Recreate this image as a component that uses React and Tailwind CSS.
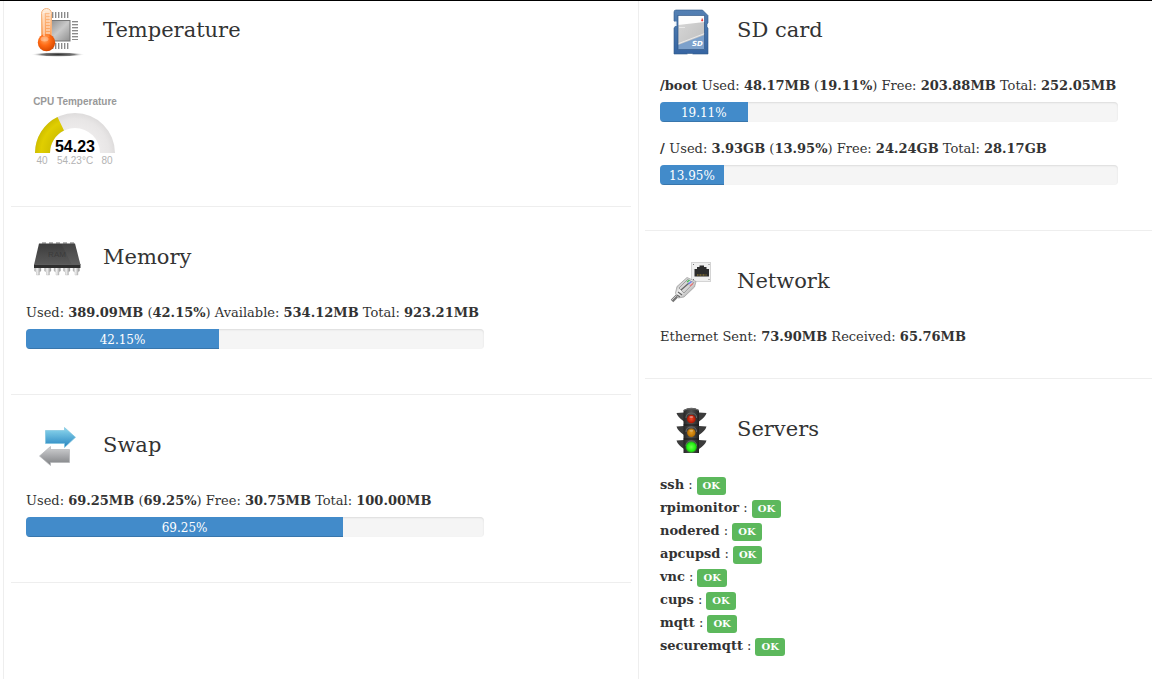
import { Fragment } from "react";

const servers = [
  "ssh",
  "rpimonitor",
  "nodered",
  "apcupsd",
  "vnc",
  "cups",
  "mqtt",
  "securemqtt",
];

const TemperatureIcon = () => (
  <svg viewBox="0 0 48 48" className="size-12 shrink-0 overflow-visible" aria-hidden="true">
    <defs>
      <linearGradient id="chip" x1="0" y1="0" x2="1" y2="1">
        <stop offset="0" stopColor="#8c8c8c" />
        <stop offset="0.5" stopColor="#c9c9c9" />
        <stop offset="1" stopColor="#8f8f8f" />
      </linearGradient>
      <linearGradient id="tube" x1="0" y1="0" x2="0" y2="1">
        <stop offset="0" stopColor="#fff3e6" />
        <stop offset="0.35" stopColor="#ffc795" />
        <stop offset="1" stopColor="#f98a3c" />
      </linearGradient>
      <radialGradient id="bulb" cx="0.4" cy="0.35" r="0.65">
        <stop offset="0" stopColor="#ffa45c" />
        <stop offset="0.5" stopColor="#ff6a14" />
        <stop offset="1" stopColor="#d94a00" />
      </radialGradient>
      <radialGradient id="ground">
        <stop offset="0" stopColor="#333" />
        <stop offset="0.6" stopColor="#777" />
        <stop offset="1" stopColor="#fff" stopOpacity="0" />
      </radialGradient>
    </defs>
    <ellipse cx="25" cy="46.5" rx="27" ry="2.4" fill="url(#ground)" />
    <path
      d="M19.500 4v6M22.500 4v6M25.500 4v6M28.500 4v6M31.500 4v6M34.500 4v6M19.500 35v6M22.500 35v6M25.500 35v6M28.500 35v6M31.500 35v6M34.500 35v6"
      stroke="#8a8a8a"
    />
    <path
      d="M20.500 4v6M23.500 4v6M26.500 4v6M29.500 4v6M32.500 4v6M35.500 4v6M20.500 35v6M23.500 35v6M26.500 35v6M29.500 35v6M32.500 35v6M35.500 35v6"
      stroke="#d4d4d4"
    />
    <path
      d="M39 13.500h6M39 16.500h6M39 19.500h6M39 22.500h6M39 25.500h6M39 28.500h6M39 31.500h6"
      stroke="#8a8a8a"
    />
    <path
      d="M39 14.500h6M39 17.500h6M39 20.500h6M39 23.500h6M39 26.500h6M39 29.500h6"
      stroke="#d4d4d4"
    />
    <rect x="16" y="12.5" width="21" height="20.5" fill="url(#chip)" stroke="#777" />
    <rect x="8.5" y="0.5" width="10" height="34" rx="5" fill="url(#tube)" stroke="#f5b27c" />
    <circle cx="13.5" cy="34.5" r="8.7" fill="url(#bulb)" />
    <path d="M10.5 5v24h6V5z" fill="#fc9a50" opacity="0.5" />
    <path d="M13 7h4M13 10h4M13 13h4M13 16h4M13 19h4M13 22h4M13 25h4" stroke="#fff" strokeWidth="0.8" />
    <path d="M11 4v24" stroke="#fff" strokeWidth="1.4" opacity="0.6" />
    <ellipse cx="11.5" cy="31" rx="4" ry="2.5" fill="#fff" opacity="0.3" />
  </svg>
);

const MemoryIcon = () => (
  <svg viewBox="0 0 48 48" className="size-12 shrink-0" aria-hidden="true">
    <defs>
      <linearGradient id="ram" x1="0" y1="0" x2="0" y2="1">
        <stop offset="0" stopColor="#3c3c3c" />
        <stop offset="1" stopColor="#5a5a5a" />
      </linearGradient>
      <linearGradient id="pin" x1="0" y1="0" x2="1" y2="0">
        <stop offset="0" stopColor="#a5a5a5" />
        <stop offset="0.4" stopColor="#f2f2f2" />
        <stop offset="1" stopColor="#8c8c8c" />
      </linearGradient>
    </defs>
    <path d="M9 8h4M16 8h4M23 8h4M30 8h4M37 8h4" stroke="#b5b5b5" strokeWidth="2" />
    {[1.5, 11.5, 21, 30.5, 40].map((x) => (
      <path key={x} d={`M${x} 31h6.500v5l-1.500 1v3h-3v-3l-2-1z`} fill="url(#pin)" stroke="#b5b5b5" strokeWidth="0.4" />
    ))}
    <path d="M6 8.500h36l5.500 21.500H1z" fill="url(#ram)" />
    <path d="M28 8.500h14l5.500 21.500H39z" fill="#fff" opacity="0.04" />
    <path d="M1 29.500h46.500v3.500H1z" fill="#2e2e2e" />
    <path d="M1 29.500h46.500" stroke="#6e6e6e" strokeWidth="0.6" />
    <text
      x="24"
      y="22"
      textAnchor="middle"
      fontSize="8"
      fill="#3b3b3b"
      className="font-['Liberation_Sans',sans-serif]"
    >
      RAM
    </text>
  </svg>
);

const SwapIcon = () => (
  <svg viewBox="0 0 48 48" className="size-12 shrink-0" aria-hidden="true">
    <defs>
      <linearGradient id="right" x1="0" y1="0" x2="0" y2="1">
        <stop offset="0" stopColor="#8fd9ee" />
        <stop offset="1" stopColor="#2583c0" />
      </linearGradient>
      <linearGradient id="left" x1="0" y1="0" x2="0" y2="1">
        <stop offset="0" stopColor="#d2d3d5" />
        <stop offset="1" stopColor="#7d7f82" />
      </linearGradient>
    </defs>
    <path d="M12.500 7.500H31.500V4.500L42.500 14.300L31.500 24.500V20.500H12.500z" fill="url(#right)" stroke="#7fc4de" strokeWidth="0.7" />
    <path d="M36.500 26.500H17.500V23.500L6.500 33L17.500 42.500V39.500H36.500z" fill="url(#left)" stroke="#b3b5b7" strokeWidth="0.7" />
  </svg>
);

const SdCardIcon = () => (
  <svg viewBox="0 0 48 48" className="size-12 shrink-0" aria-hidden="true">
    <defs>
      <linearGradient id="card" x1="0" y1="0" x2="0" y2="1">
        <stop offset="0" stopColor="#5480b3" />
        <stop offset="1" stopColor="#3665a2" />
      </linearGradient>
      <linearGradient id="label" x1="0" y1="0" x2="1" y2="1">
        <stop offset="0" stopColor="#d8d8d8" />
        <stop offset="1" stopColor="#bdbdbd" />
      </linearGradient>
    </defs>
    <path
      d="M9 2H35.500L41 7.500V15l-1 1v3l1 1V46H26l-1-.5h-4l-1 .5H7V20l1.500-2V14L7 13V4q0-2 2-2z"
      fill="url(#card)"
      stroke="#315988"
      strokeWidth="0.6"
    />
    <path d="M7.500 13.500h2v4.500h-2z" fill="#eef3f8" />
    <rect x="11" y="7.500" width="26.500" height="34" fill="url(#label)" />
    <path d="M11 7.500h26.500V14L11 17z" fill="#fdfdfd" />
    <path d="M11 37L37.500 27V41.500H11z" fill="#7da1cb" />
    <path d="M11 35.800L37.500 25.600" stroke="#f2f2f2" strokeWidth="0.8" />
    <path d="M34.500 13l.7-2.500.7 2.500z" fill="#e22" stroke="#e22" strokeWidth="0.5" />
    <path d="M12.500 19.500h6" stroke="#fff" strokeDasharray="1 1" />
    <rect x="11" y="7.500" width="26.500" height="34" fill="none" stroke="#2d5587" strokeWidth="0.7" />
    <text
      x="25"
      y="38"
      fontSize="7"
      fontWeight="bold"
      fontStyle="italic"
      fill="#fff"
      className="font-['DejaVu_Sans',sans-serif]"
    >
      SD
    </text>
  </svg>
);

const NetworkIcon = () => (
  <svg viewBox="0 0 48 48" className="size-12 shrink-0" aria-hidden="true">
    <defs>
      <linearGradient id="plug" x1="0" y1="0" x2="1" y2="1">
        <stop offset="0" stopColor="#8d8d8d" />
        <stop offset="0.45" stopColor="#f4f4f4" />
        <stop offset="1" stopColor="#777" />
      </linearGradient>
    </defs>
    <rect x="24.500" y="3.500" width="19" height="19" fill="#efefef" stroke="#d4d4d4" />
    <path d="M26 5.500h1M41.500 5.500h1M26 20.500h1M41.500 20.500h1" stroke="#777" />
    <path d="M27.500 17.500V10h2.500V8h2.500V6.500h4.500V8h2.500v2h2.500v7.500z" fill="#2b2b2b" />
    <path d="M30 16h9.500" stroke="#6b5c30" strokeWidth="2" strokeDasharray="1 0.5" />
    <path d="M5 42L14 33" stroke="#777" strokeWidth="3.600" />
    <path d="M5 41L13 33" stroke="#c8c8c8" strokeWidth="1" />
    <path d="M8.500 34L10 27.500L20 18.500L29 22.500L27.500 28L17 38L11 39z" fill="url(#plug)" stroke="#999" strokeWidth="0.700" />
    <path d="M12 29L20.500 20.500L27 23.500L17 34z" fill="#d6d6d6" stroke="#777" strokeWidth="0.600" />
    <path d="M14 31L22 24M11 33l4 3M10 36l3 2" stroke="#666" strokeWidth="1.200" />
    <path d="M20 23l2.500-2" stroke="#3fc45a" strokeWidth="1.300" />
    <path d="M21.500 25l3-2.500" stroke="#6c7cf0" strokeWidth="1.300" />
    <path d="M23 27l3-2.500" stroke="#ec7474" strokeWidth="1.300" />
  </svg>
);

const ServersIcon = () => (
  <svg viewBox="0 0 48 48" className="size-12 shrink-0" aria-hidden="true">
    <defs>
      <linearGradient id="housing" x1="0" y1="0" x2="1" y2="0">
        <stop offset="0" stopColor="#262626" />
        <stop offset="0.5" stopColor="#525252" />
        <stop offset="1" stopColor="#222" />
      </linearGradient>
      <radialGradient id="red">
        <stop offset="0" stopColor="#ee4a2a" />
        <stop offset="1" stopColor="#a81400" />
      </radialGradient>
      <radialGradient id="amber">
        <stop offset="0" stopColor="#e49a20" />
        <stop offset="1" stopColor="#b56d00" />
      </radialGradient>
      <radialGradient id="green">
        <stop offset="0" stopColor="#6cff4c" />
        <stop offset="0.7" stopColor="#20f010" />
        <stop offset="1" stopColor="#1ac60e" stopOpacity="0.5" />
      </radialGradient>
    </defs>
    <path
      d="M17 5.500L9.500 6q1 4 7.500 8.500zM32 5.500L39.500 6q-1 4-7.500 8.500zM17 19L9.500 19.500q1 4 7.500 8.500zM32 19L39.500 19.500q-1 4-7.500 8.500zM17 33L9.500 33.500q1 4 7.500 8.500zM32 33L39.500 33.500q-1 4-7.500 8.500z"
      fill="#3b3b3b"
    />
    <path d="M16.500 3q8-4.500 15.500 0V46H16.500z" fill="url(#housing)" />
    <path d="M16.500 3.500q8-4 15.500 0" fill="none" stroke="#7a7a7a" strokeWidth="0.800" />
    <path d="M16.500 18H32M16.500 32H32" stroke="#171717" strokeWidth="1.200" />
    <path d="M19 11q0-5 5.300-5t5.300 5M19 25q0-5 5.300-5t5.300 5M19 39q0-5 5.300-5t5.300 5" fill="none" stroke="#666" />
    <circle cx="24.300" cy="12" r="4.300" fill="url(#red)" />
    <circle cx="24.300" cy="25.700" r="4.200" fill="url(#amber)" />
    <circle cx="24.300" cy="40" r="5.800" fill="url(#green)" />
    <ellipse cx="24.300" cy="10" rx="2" ry="1" fill="#fff" opacity="0.4" />
    <ellipse cx="24.300" cy="23.700" rx="2" ry="1" fill="#fff" opacity="0.35" />
  </svg>
);

const Gauge = () => (
  <svg
    viewBox="0 0 84 80"
    role="img"
    aria-label="CPU Temperature 54.23°C"
    className="w-21 h-20 overflow-visible font-['Liberation_Sans',sans-serif]"
  >
    <defs>
      <radialGradient id="track" gradientUnits="userSpaceOnUse" cx="42" cy="61" r="40">
        <stop offset="0.6" stopColor="#edebeb" />
        <stop offset="0.85" stopColor="#e8e6e6" />
        <stop offset="1" stopColor="#dedcdc" />
      </radialGradient>
      <radialGradient id="level" gradientUnits="userSpaceOnUse" cx="42" cy="61" r="40">
        <stop offset="0.6" stopColor="#d0c000" />
        <stop offset="0.85" stopColor="#e0ce00" />
        <stop offset="1" stopColor="#cfbe00" />
      </radialGradient>
    </defs>
    <path d="M2 61A40 40 0 0 1 82 61H67A25 25 0 0 0 17 61z" fill="url(#track)" />
    <path d="M2 61A40 40 0 0 1 24.500 25L31 38.500A25 25 0 0 0 17 61z" fill="url(#level)" />
    <g textAnchor="middle">
      <text x="42" y="13" fontSize="10" fontWeight="bold" fill="#999">
        CPU Temperature
      </text>
      <text x="42" y="60" fontSize="16" fontWeight="bold" fill="#010101">
        54.23
      </text>
      <g fontSize="10" fill="#b3b3b3">
        <text x="9" y="72">40</text>
        <text x="42" y="72">54.23°C</text>
        <text x="74" y="72">80</text>
      </g>
    </g>
  </svg>
);

const Section = ({ icon, title, first, last, children }) => (
  <section
    className={
      "px-[15px] " + (first ? "pt-[7px] " : "pt-7 ") + (last ? "" : "border-b border-[#eee]")
    }
  >
    <div className="mb-5 flex gap-[22px] pl-[7px]">
      {icon}
      <h3 className="text-[21px] leading-[44px]">{title}</h3>
    </div>
    {children}
  </section>
);

// each part is a [label, value] pair, the value in bold
const Stats = ({ parts }) => (
  <p>
    {parts.map(([label, value], i) => (
      <Fragment key={i}>
        {label}
        <b>{value}</b>{" "}
      </Fragment>
    ))}
  </p>
);

const Usage = ({ name, used, percent, freeLabel = "Free", free, total }) => (
  <div className="mb-[17px]">
    <p className="mb-1.5">
      {name && <b>{name} </b>}
      Used: <b>{used}</b> (<b>{percent}%</b>) {freeLabel}: <b>{free}</b> Total: <b>{total}</b>
    </p>
    <div className="h-5 max-w-[458px] overflow-hidden rounded bg-[#f5f5f5] shadow-[inset_0_1px_2px_rgba(0,0,0,0.1)]">
      <div
        className="h-full bg-[#428bca] text-center text-xs leading-[22px] text-white shadow-[inset_0_-1px_0_rgba(0,0,0,0.15)]"
        style={{ width: percent + "%" }}
      >
        {percent}%
      </div>
    </div>
  </div>
);

const App = () => {
  return (
    <main className="grid min-h-screen grid-cols-[635fr_514fr] border-t border-black bg-white pl-[3px] font-['DejaVu_Serif',serif] text-[13px] leading-5 text-[#333]">
      <div className="border-l border-[#eee] px-[7px]">
        <Section first icon={<TemperatureIcon />} title="Temperature">
          <div className="pt-4 pb-[34px] pl-[7px]">
            <Gauge />
          </div>
        </Section>

        <Section icon={<MemoryIcon />} title="Memory">
          <div className="pb-7">
            <Usage
              used="389.09MB"
              percent="42.15"
              freeLabel="Available"
              free="534.12MB"
              total="923.21MB"
            />
          </div>
        </Section>

        <Section icon={<SwapIcon />} title="Swap">
          <div className="pb-7">
            <Usage used="69.25MB" percent="69.25" free="30.75MB" total="100.00MB" />
          </div>
        </Section>
      </div>

      <div className="border-l border-[#eee] pl-1.5">
        <Section first icon={<SdCardIcon />} title="SD card">
          <div className="pb-7">
            <Usage name="/boot" used="48.17MB" percent="19.11" free="203.88MB" total="252.05MB" />
            <Usage name="/" used="3.93GB" percent="13.95" free="24.24GB" total="28.17GB" />
          </div>
        </Section>

        <Section icon={<NetworkIcon />} title="Network">
          <div className="pb-[31px]">
            <Stats
              parts={[
                ["Ethernet Sent: ", "73.90MB"],
                ["Received: ", "65.76MB"],
              ]}
            />
          </div>
        </Section>

        <Section last icon={<ServersIcon />} title="Servers">
          <ul>
            {servers.map((name) => (
              <li key={name} className="flex h-[23px] items-start gap-1">
                <span>
                  <b>{name}</b> :
                </span>
                <span className="mt-0.5 rounded-[3px] bg-[#5cb85c] px-1.5 text-[10px] leading-[18px] font-bold text-white">
                  OK
                </span>
              </li>
            ))}
          </ul>
        </Section>
      </div>
    </main>
  );
};

export default App;
